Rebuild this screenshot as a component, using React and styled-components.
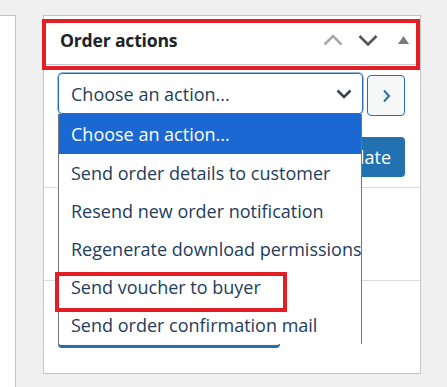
import React from "react";
import styled, { createGlobalStyle } from "styled-components";

const GlobalStyle = createGlobalStyle`
  html, body {
    margin: 0;
    padding: 0;
    background: #f0f0f1;
    font-family: "Open Sans", "Noto Sans", sans-serif;
  }
`;

const Page = styled.div`
  display: flex;
  align-items: flex-start;
  gap: 27px;
  padding-top: 15px;
  height: 372px;
  overflow: hidden;
`;

const SidePanel = styled.div`
  width: 15px;
  height: 400px;
  background: #fff;
  border-top: 1px solid #c3c4c7;
  border-right: 1px solid #c3c4c7;
`;

const Postbox = styled.div`
  position: relative;
  width: 376px;
  height: 357px;
  background: #fff;
  border: 1px solid #c3c4c7;
`;

const Header = styled.div`
  display: flex;
  align-items: center;
  height: 48px;
  padding: 0 6px 0 16px;
  border-bottom: 1px solid #c3c4c7;
`;

const Title = styled.h2`
  flex: 1;
  margin: 0;
  font-size: 17.6px;
  font-weight: 700;
  color: #1d2327;
  letter-spacing: -0.2px;
`;

const HandleButton = styled.span`
  display: flex;
  align-items: center;
  justify-content: center;
  width: 35px;
  height: 20px;
  color: ${(p) => p.$color};
`;

const ToggleButton = styled.span`
  display: flex;
  align-items: center;
  justify-content: center;
  box-sizing: border-box;
  width: 29px;
  height: 20px;
  padding-left: 8px;
  color: #787c82;
`;

const Highlight = styled.div`
  position: absolute;
  left: ${(p) => p.$x}px;
  top: ${(p) => p.$y}px;
  width: ${(p) => p.$w}px;
  height: ${(p) => p.$h}px;
  box-sizing: border-box;
  border: 4px solid #e31e24;
  z-index: 5;
  pointer-events: none;
`;

const Section = styled.div`
  height: ${(p) => p.$h}px;
  box-sizing: border-box;
  padding: ${(p) => p.$pad};
  border-bottom: ${(p) => (p.$last ? "none" : "1px solid #dcdcde")};
`;

const SelectRow = styled.div`
  display: flex;
  align-items: flex-start;
  gap: 4px;
`;

const SelectBox = styled.div`
  display: flex;
  align-items: center;
  justify-content: space-between;
  box-sizing: border-box;
  width: 305px;
  height: 41px;
  padding: 0 10px 0 12px;
  border: 1px solid #2271b1;
  border-radius: 4px;
  box-shadow: 0 0 0 0.4px #2271b1;
  font-size: 18px;
  color: #1e3d5c;
`;

const GoButton = styled.button`
  display: flex;
  align-items: center;
  justify-content: center;
  margin-top: 2px;
  width: 38px;
  height: 41px;
  padding: 0;
  background: #f6f7f7;
  border: 1px solid #2271b1;
  border-radius: 4px;
  color: #2271b1;
`;

const ActionsRow = styled.div`
  display: flex;
  align-items: center;
  justify-content: space-between;
  margin-top: 21px;
`;

const TrashLink = styled.span`
  font-size: 18px;
  color: #b32d2e;
`;

const PrimaryButton = styled.button`
  height: 40px;
  padding: 0 14px;
  background: #2271b1;
  border: none;
  border-radius: 4px;
  color: #fff;
  font-family: inherit;
  font-size: 18px;
`;

const OutlineButton = styled.div`
  width: ${(p) => p.$w}px;
  height: ${(p) => p.$h}px;
  box-sizing: border-box;
  border: 1px solid #2271b1;
  border-bottom-width: 3px;
  border-radius: 4px;
  background: #f6f7f7;
`;

const Dropdown = styled.ul`
  position: absolute;
  left: 14px;
  top: 98px;
  z-index: 3;
  width: 304px;
  margin: 0;
  padding: 0;
  list-style: none;
  box-sizing: border-box;
  background: #fff;
  border-left: 1px solid #767676;
  border-right: 1px solid #767676;
`;

const Option = styled.li`
  display: flex;
  align-items: center;
  height: ${(p) => (p.$active ? 40 : 38)}px;
  padding-left: 12px;
  background: ${(p) => (p.$active ? "#1b68d3" : "#fff")};
  color: ${(p) => (p.$active ? "#fff" : "#1e3d5c")};
  font-size: 18px;
  white-space: nowrap;
  overflow: hidden;
`;

const Chevron = ({ dir, stroke = 2.6 }) => {
  if (dir === "right") {
    return (
      <svg width="9" height="14" viewBox="0 0 9 14">
        <path d="M2 1.5 L7 7 L2 12.5" fill="none" stroke="currentColor" strokeWidth={stroke} />
      </svg>
    );
  }
  const d = dir === "up" ? "M1.5 11.5 L10 3 L18.5 11.5" : "M1.5 3 L10 11.5 L18.5 3";
  return (
    <svg width="20" height="14" viewBox="0 0 20 14">
      <path d={d} fill="none" stroke="currentColor" strokeWidth={stroke} />
    </svg>
  );
};

const options = [
  "Choose an action...",
  "Send order details to customer",
  "Resend new order notification",
  "Regenerate download permissions",
  "Send voucher to buyer",
  "Send order confirmation mail",
];

export default function App() {
  return (
    <>
      <GlobalStyle />
      <Page>
        <SidePanel />
        <Postbox>
          <Header>
            <Title>Order actions</Title>
            <HandleButton $color="#a7aaad">
              <Chevron dir="up" />
            </HandleButton>
            <HandleButton $color="#50575e">
              <Chevron dir="down" />
            </HandleButton>
            <ToggleButton>
              <svg width="11" height="8" viewBox="0 0 11 8">
                <path d="M0 8 L5.5 0 L11 8 Z" fill="currentColor" />
              </svg>
            </ToggleButton>
          </Header>
          <Highlight $x={-2} $y={3} $w={378} $h={51} />

          <Section $h={123} $pad="8px 15px 0 14px">
            <SelectRow>
              <SelectBox>
                <span>Choose an action...</span>
                <svg width="16" height="10" viewBox="0 0 16 10">
                  <path d="M1.5 1.5 L8 8 L14.5 1.5" fill="none" stroke="#3c434a" strokeWidth="2.6" />
                </svg>
              </SelectBox>
              <GoButton aria-label="Apply">
                <Chevron dir="right" stroke={2} />
              </GoButton>
            </SelectRow>
            <ActionsRow>
              <TrashLink>Move to Trash</TrashLink>
              <PrimaryButton>Update</PrimaryButton>
            </ActionsRow>
          </Section>

          <Section $h={93} $pad="26px 14px 0">
            <OutlineButton $w={300} $h={42} />
          </Section>

          <Section $h={93} $pad="19px 14px 0" $last>
            <OutlineButton $w={222} $h={48} />
          </Section>

          <Dropdown>
            {options.map((o, i) => (
              <Option key={o} $active={i === 0}>
                {o}
              </Option>
            ))}
          </Dropdown>
          <Highlight $x={11} $y={256} $w={232} $h={40} />
        </Postbox>
      </Page>
    </>
  );
}
